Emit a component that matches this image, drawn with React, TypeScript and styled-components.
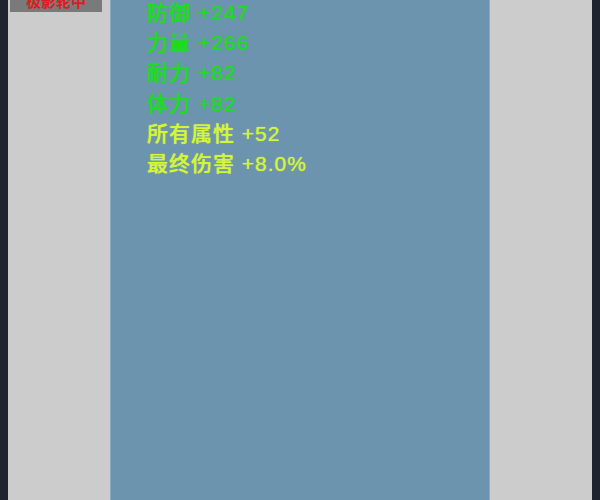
import React from 'react';
import styled, { createGlobalStyle } from 'styled-components';

type Stat = { name: string; value: string; tone: 'base' | 'bonus' };

const stats: Stat[] = [
  { name: '防御', value: '+247', tone: 'base' },
  { name: '力量', value: '+266', tone: 'base' },
  { name: '耐力', value: '+82', tone: 'base' },
  { name: '体力', value: '+82', tone: 'base' },
  { name: '所有属性', value: '+52', tone: 'bonus' },
  { name: '最终伤害', value: '+8.0%', tone: 'bonus' },
];

const GlobalStyle = createGlobalStyle`
  html, body {
    margin: 0;
    padding: 0;
    background: #1e2430;
    overflow: hidden;
  }
`;

const App: React.FC = () => {
  return (
    <>
      <GlobalStyle />
      <Frame>
        <SidePanel>
          <TabButton>极影轮中</TabButton>
        </SidePanel>
        <StatPanel>
          <StatList>
            {stats.map((s) => (
              <StatRow key={s.name} tone={s.tone}>
                {s.name} {s.value}
              </StatRow>
            ))}
          </StatList>
        </StatPanel>
        <SidePanel />
      </Frame>
    </>
  );
};

const Frame = styled.div`
  display: flex;
  height: 500px;
  padding: 0 8px;
  box-sizing: border-box;
  background: #1e2430;
`;

const SidePanel = styled.div`
  width: 102px;
  flex-shrink: 0;
  background: #cccccc;
  display: flex;
  flex-direction: column;
  align-items: flex-start;
`;

const TabButton = styled.div`
  margin: -11px 0 0 2px;
  width: 92px;
  height: 23px;
  background: #7a7a7a;
  color: #dc1c1c;
  font-family: 'Noto Sans CJK SC', sans-serif;
  font-weight: 700;
  font-size: 15px;
  line-height: 23px;
  text-align: center;
`;

const StatPanel = styled.div`
  flex: 1;
  background: #6c94ae;
  border-left: 1px solid #8aaac0;
  border-right: 1px solid #8aaac0;
  padding-left: 36px;
`;

const StatList = styled.div`
  margin-top: -2px;
  display: flex;
  flex-direction: column;
`;

const StatRow = styled.div<{ tone: 'base' | 'bonus' }>`
  font-family: 'Liberation Sans', 'Noto Sans CJK SC', sans-serif;
  font-weight: 500;
  font-size: 21px;
  letter-spacing: 1px;
  line-height: 30.2px;
  color: ${(p) => (p.tone === 'base' ? '#1fdc22' : '#d3f53a')};
  text-shadow: 0 0 1px ${(p) => (p.tone === 'base' ? '#1fdc22' : '#d3f53a')};
  white-space: pre;
`;

export default App;
